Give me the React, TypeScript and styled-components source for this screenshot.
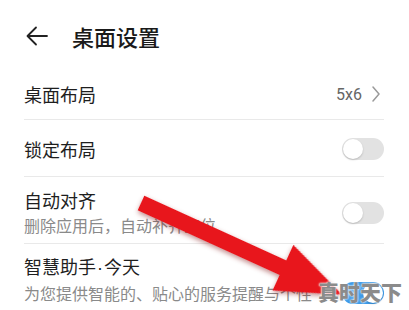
import React, { FC } from 'react';
import styled, { createGlobalStyle } from 'styled-components';

const GlobalStyle = createGlobalStyle`
    html, body {
        margin: 0;
        padding: 0;
        background: #ffffff;
    }
    body {
        font-family: 'Noto Sans CJK SC', 'Noto Sans', sans-serif;
        color: #1c1c1c;
    }
`;

const Screen = styled.div`
    position: relative;
    width: 409px;
    height: 310px;
    overflow: hidden;
    background: #ffffff;
`;

const Header = styled.div`
    height: 65px;
    display: flex;
    align-items: center;
    padding: 6px 0 0 26px;
    box-sizing: border-box;
    gap: 24px;
`;

const BackButton = styled.div`
    width: 22px;
    height: 22px;
    display: flex;
    align-items: center;
    justify-content: center;
`;

const Title = styled.h1`
    margin: 0;
    font-size: 22px;
    font-weight: 500;
    line-height: 30px;
    color: #1a1a1a;
`;

const List = styled.div`
    padding: 0 25px 0 24px;
`;

const Row = styled.div<{ padTop: number; padBottom: number }>`
    display: flex;
    align-items: center;
    justify-content: space-between;
    padding: ${({ padTop, padBottom }) => `${padTop}px 0 ${padBottom}px`};
    border-bottom: 1px solid #e9e9e9;
`;

const TextBlock = styled.div`
    display: flex;
    flex-direction: column;
    flex: 1;
    min-width: 0;
`;

const Label = styled.span`
    font-size: 18px;
    line-height: 24px;
    color: #1e1e1e;
`;

const Dot = styled.span`
    font-family: 'Liberation Sans', sans-serif;
    padding: 0 1px;
`;

const Hint = styled.span`
    max-width: 292px;
    font-size: 16px;
    line-height: 26px;
    color: #8a8a8a;
`;

const ValueWrap = styled.div`
    display: flex;
    align-items: center;
    gap: 10px;
    padding-right: 4px;
`;

const Value = styled.span`
    font-family: 'Roboto', 'Noto Sans', sans-serif;
    font-size: 16px;
    color: #666666;
`;

const Track = styled.div<{ on?: boolean }>`
    position: relative;
    width: 42px;
    height: 22px;
    border-radius: 11px;
    background: ${({ on }) => (on ? '#3d9be9' : '#e2e2e2')};
    flex-shrink: 0;
`;

const Knob = styled.div<{ on?: boolean }>`
    position: absolute;
    top: 1px;
    left: ${({ on }) => (on ? '21px' : '1px')};
    width: 20px;
    height: 20px;
    border-radius: 50%;
    background: #ffffff;
    box-shadow: 0 1px 2px rgba(0, 0, 0, 0.18);
`;

const Overlay = styled.svg`
    position: absolute;
    top: 0;
    left: 0;
    pointer-events: none;
`;

const Watermark = styled.span`
    position: absolute;
    left: 318px;
    top: 276px;
    font-size: 21px;
    font-weight: 900;
    color: #8b8b8b;
    text-shadow: 0 0 2px #ffffff, 0 0 2px #ffffff;
`;

const Toggle: FC<{ on?: boolean }> = ({ on }) => (
    <Track on={on}>
        <Knob on={on} />
    </Track>
);

const App: FC = () => {
    return (
        <Screen>
            <GlobalStyle />
            <Header>
                <BackButton>
                    <svg width="22" height="20" viewBox="0 0 22 20" fill="none">
                        <path d="M21 10H2M10 1.5L1.5 10l8.5 8.5" stroke="#222" strokeWidth="1.8" strokeLinecap="round" strokeLinejoin="round" />
                    </svg>
                </BackButton>
                <Title>桌面设置</Title>
            </Header>
            <List>
                <Row padTop={17} padBottom={13}>
                    <Label>桌面布局</Label>
                    <ValueWrap>
                        <Value>5x6</Value>
                        <svg width="8" height="16" viewBox="0 0 8 16" fill="none">
                            <path d="M1 1l6 7-6 7" stroke="#9a9a9a" strokeWidth="1.5" strokeLinecap="round" strokeLinejoin="round" />
                        </svg>
                    </ValueWrap>
                </Row>
                <Row padTop={17} padBottom={15}>
                    <Label>锁定布局</Label>
                    <Toggle />
                </Row>
                <Row padTop={11} padBottom={5}>
                    <TextBlock>
                        <Label>自动对齐</Label>
                        <Hint>删除应用后，自动补齐空位</Hint>
                    </TextBlock>
                    <Toggle />
                </Row>
                <Row padTop={10} padBottom={10}>
                    <TextBlock>
                        <Label>智慧助手<Dot>·</Dot>今天</Label>
                        <Hint>为您提供智能的、贴心的服务提醒与个性化的新闻资讯服务</Hint>
                    </TextBlock>
                    <Toggle on />
                </Row>
            </List>

            {/* 红色箭头 */}
            <Overlay width="409" height="310" viewBox="0 0 409 310">
                <defs>
                    <filter id="arrowShadow" x="-20%" y="-40%" width="140%" height="180%">
                        <feGaussianBlur in="SourceAlpha" stdDeviation="2.5" />
                        <feOffset dx="1" dy="2" result="blur" />
                        <feFlood floodColor="#7a0000" floodOpacity="0.45" />
                        <feComposite in2="blur" operator="in" />
                        <feMerge>
                            <feMergeNode />
                            <feMergeNode in="SourceGraphic" />
                        </feMerge>
                    </filter>
                </defs>
                <g transform="translate(141 203) rotate(24.5)" filter="url(#arrowShadow)">
                    <rect x="0" y="-8" width="162" height="16" fill="#e8121a" />
                    <polygon points="156,-25 221,0 156,25" fill="#e8121a" />
                </g>
            </Overlay>
            <Watermark>真时天下</Watermark>
        </Screen>
    );
};

export default App;
